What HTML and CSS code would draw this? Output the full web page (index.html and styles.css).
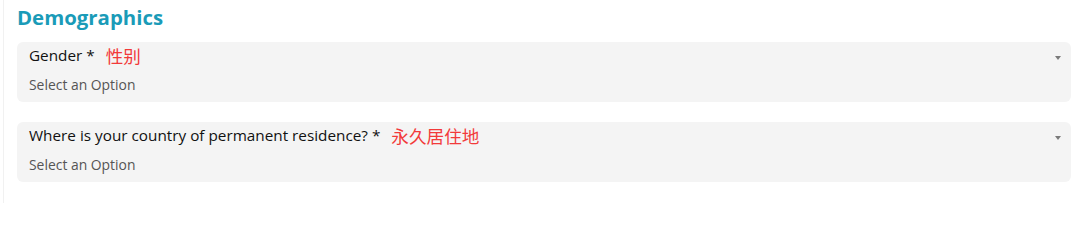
FILE: index.html
```html
<!DOCTYPE html>
<html lang="en">
<head>
<meta charset="utf-8">
<title>Demographics</title>
<link rel="stylesheet" href="styles.css">
</head>
<body>
<div class="page">
  <section class="section">
    <h2 class="title">Demographics</h2>
    <div class="field">
      <div class="field-head">
        <span class="label">Gender *</span>
        <span class="note">性别</span>
        <span class="arrow"></span>
      </div>
      <div class="value">Select an Option</div>
    </div>
    <div class="field">
      <div class="field-head">
        <span class="label">Where is your country of permanent residence? *</span>
        <span class="note">永久居住地</span>
        <span class="arrow"></span>
      </div>
      <div class="value">Select an Option</div>
    </div>
  </section>
</div>
</body>
</html>
```

FILE: styles.css
```css
html, body {
  margin: 0;
  padding: 0;
  background: #ffffff;
}
.page {
  margin-left: 3px;
  border-left: 1px solid #f1f1f1;
  height: 203px;
  box-sizing: border-box;
  overflow: hidden;
}
.section {
  padding: 2px 9px 0 13px;
  font-family: "Open Sans", "Noto Sans CJK SC", sans-serif;
}
.title {
  margin: 0 0 10px 0;
  font-size: 20.4px;
  font-weight: 700;
  color: #1a9bb8;
  line-height: 30px;
}
.field {
  background: #f4f4f4;
  border-radius: 6px;
  height: 60px;
  box-sizing: border-box;
  padding: 2px 11px 0 12px;
  margin-bottom: 20px;
}
.field-head {
  display: flex;
  align-items: center;
  height: 22px;
}
.label {
  font-size: 15.3px;
  color: #111;
}
.note {
  font-family: "Noto Sans CJK SC", sans-serif;
  color: #f23a3a;
  font-size: 17.6px;
  margin-left: 11px;
}
.arrow {
  margin-left: auto;
  margin-right: -1px;
  margin-top: 5px;
  width: 0;
  height: 0;
  border-left: 3px solid transparent;
  border-right: 3px solid transparent;
  border-top: 4px solid #7a7a7a;
}
.value {
  margin-top: 9px;
  font-size: 13.9px;
  color: #555;
  line-height: 20px;
}
```
